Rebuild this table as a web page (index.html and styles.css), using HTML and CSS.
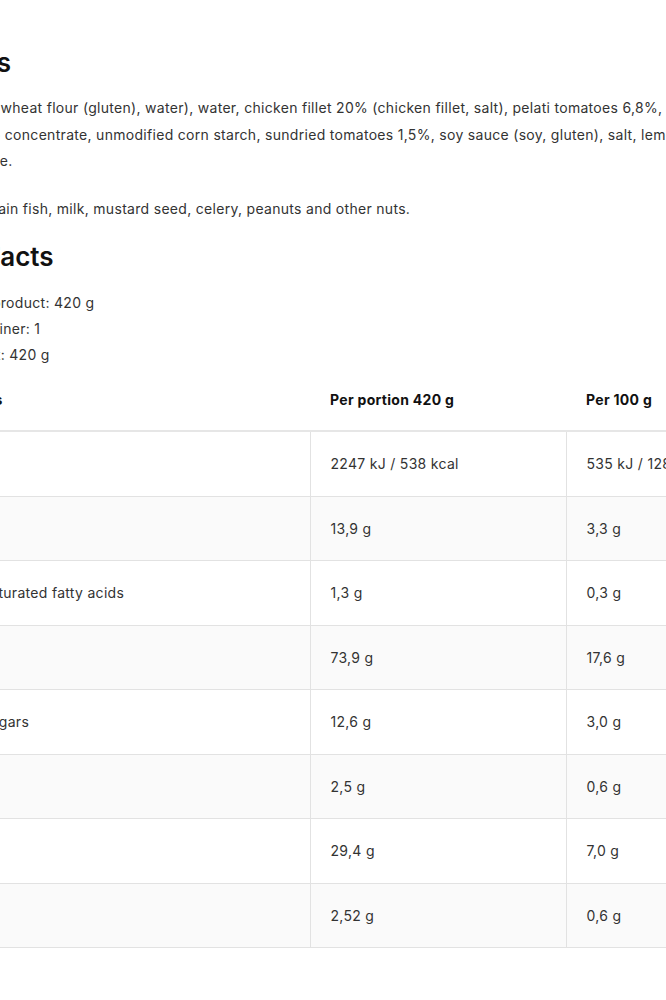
FILE: index.html
```html
<!DOCTYPE html>
<html lang="en">
<head>
<meta charset="utf-8">
<title>Ingredients and Nutrition Facts</title>
<link rel="stylesheet" href="styles.css">
</head>
<body>
<main class="page">
  <section class="ingredients">
    <h2 class="section-title">Ingredients</h2>
    <p class="text">Tortilla wrap 30% (wheat flour (gluten), water), water, chicken fillet 20% (chicken fillet, salt), pelati tomatoes 6,8%, onion, cream, rapeseed oil,<br>leek, onion, tomato concentrate, unmodified corn starch, sundried tomatoes 1,5%, soy sauce (soy, gluten), salt, lemon juice, garlic, spices,<br>chili, paprika, thyme.</p>
    <p class="text allergens">Products may contain fish, milk, mustard seed, celery, peanuts and other nuts.</p>
  </section>
  <section class="facts">
    <h2 class="section-title">Nutrition Facts</h2>
    <p class="info">Total net mass of product: 420 g<br>Meals in one container: 1<br>One portion weight: 420 g</p>
    <table class="nutrition">
      <thead>
        <tr><th>Energy &amp; Nutrients</th><th>Per portion 420 g</th><th>Per 100 g</th></tr>
      </thead>
      <tbody>
        <tr><td>Energy value</td><td>2247 kJ / 538 kcal</td><td>535 kJ / 128 kcal</td></tr>
        <tr><td>Fat</td><td>13,9 g</td><td>3,3 g</td></tr>
        <tr><td class="sub">of which saturated fatty acids</td><td>1,3 g</td><td>0,3 g</td></tr>
        <tr><td>Carbohydrates</td><td>73,9 g</td><td>17,6 g</td></tr>
        <tr><td class="sub">of which sugars</td><td>12,6 g</td><td>3,0 g</td></tr>
        <tr><td>Fibre</td><td>2,5 g</td><td>0,6 g</td></tr>
        <tr><td>Protein</td><td>29,4 g</td><td>7,0 g</td></tr>
        <tr><td>Salt</td><td>2,52 g</td><td>0,6 g</td></tr>
      </tbody>
    </table>
  </section>
</main>
</body>
</html>
```
FILE: styles.css
```css
html, body {
  margin: 0;
  padding: 0;
  background: #ffffff;
}
body {
  overflow: hidden;
  font-family: Inter, "Noto Sans", sans-serif;
  font-size: 14px;
  letter-spacing: 0.3px;
  color: #333333;
}
.page {
  margin-left: -131px;
  width: 1000px;
  padding-top: 45px;
}
.section-title {
  margin: 0;
  font-size: 26px;
  line-height: 36px;
  font-weight: 600;
  letter-spacing: 0;
  color: #111111;
}
.text {
  margin: 14px 0 0;
  line-height: 26.5px;
}
.allergens {
  margin-top: 21px;
}
.facts .section-title {
  margin-top: 17px;
}
.info {
  margin: 15px 0 0;
  line-height: 26px;
}
.nutrition {
  border-collapse: collapse;
  table-layout: fixed;
  width: 953px;
}
.nutrition th {
  height: 62px;
  padding: 0 20px;
  text-align: left;
  font-weight: 700;
  color: #111111;
  border-bottom: 2px solid #e6e6e6;
}
.nutrition th:first-child,
.nutrition td:first-child {
  width: 421px;
  padding-left: 0;
}
.nutrition td {
  height: 63.5px;
  padding: 0 20px;
  border-bottom: 1px solid #e2e2e2;
  border-left: 1px solid #e2e2e2;
}
.nutrition td:first-child {
  border-left: none;
}
.nutrition td.sub {
  padding-left: 50px;
}
.nutrition tbody tr:nth-child(even) td {
  background: #fafafa;
}
```
